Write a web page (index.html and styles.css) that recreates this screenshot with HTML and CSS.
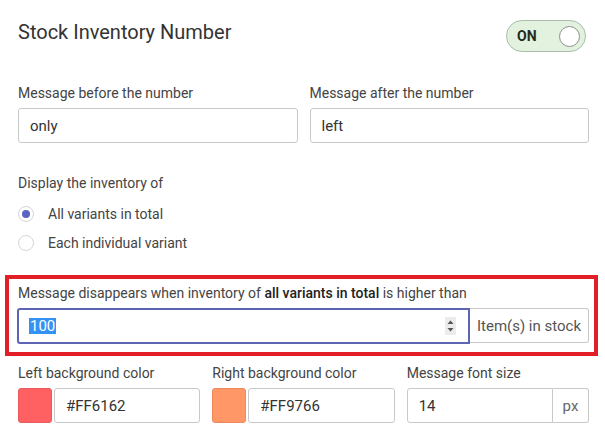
FILE: index.html
```html
<!DOCTYPE html>
<html lang="en">
<head>
<meta charset="utf-8">
<title>Stock Inventory Number</title>
<link rel="stylesheet" href="styles.css">
</head>
<body>
<div class="page">
  <div class="header">
    <h1 class="title">Stock Inventory Number</h1>
    <div class="toggle">
      <span class="toggle-label">ON</span>
      <span class="knob"></span>
    </div>
  </div>

  <div class="row row-two">
    <div class="field">
      <label class="label">Message before the number</label>
      <input class="input" type="text" value="only" readonly>
    </div>
    <div class="field">
      <label class="label">Message after the number</label>
      <input class="input" type="text" value="left" readonly>
    </div>
  </div>

  <div class="group">
    <div class="label">Display the inventory of</div>
    <div class="radios">
      <div class="radio-row"><span class="radio checked"></span><span class="radio-text">All variants in total</span></div>
      <div class="radio-row"><span class="radio"></span><span class="radio-text">Each individual variant</span></div>
    </div>
  </div>

  <div class="highlight">
    <div class="label">Message disappears when inventory of <strong>all variants in total</strong> is higher than</div>
    <div class="input-group">
      <div class="number-input">
        <span class="selected">100</span>
        <span class="spinner">
          <svg width="11" height="18" viewBox="0 0 11 18"><path d="M2.5 7 L5.5 3.5 L8.5 7 Z" fill="#555"/><path d="M2.5 11 L5.5 14.5 L8.5 11 Z" fill="#555"/></svg>
        </span>
      </div>
      <div class="addon addon-wide">Item(s) in stock</div>
    </div>
  </div>

  <div class="row row-three">
    <div class="field">
      <label class="label">Left background color</label>
      <div class="color-group">
        <span class="swatch swatch-red"></span>
        <input class="input" type="text" value="#FF6162" readonly>
      </div>
    </div>
    <div class="field">
      <label class="label">Right background color</label>
      <div class="color-group">
        <span class="swatch swatch-orange"></span>
        <input class="input" type="text" value="#FF9766" readonly>
      </div>
    </div>
    <div class="field">
      <label class="label">Message font size</label>
      <div class="input-group">
        <input class="input input-joined" type="text" value="14" readonly>
        <div class="addon addon-px">px</div>
      </div>
    </div>
  </div>
</div>
</body>
</html>
```

FILE: styles.css
```css
* { box-sizing: border-box; }

html, body {
  margin: 0;
  padding: 0;
  background: #ffffff;
}

body {
  font-family: Roboto, "Liberation Sans", Arial, sans-serif;
  color: #333333;
}

.page {
  padding: 20px 16px 0 18px;
}

.header {
  display: flex;
  justify-content: space-between;
  align-items: flex-start;
  height: 32px;
  margin-bottom: 31px;
}

.title {
  margin: 0;
  font-size: 20px;
  line-height: 24px;
  font-weight: 400;
  color: #333333;
}

.toggle {
  width: 80px;
  height: 32px;
  margin-right: 3px;
  border-radius: 16px;
  background: #e3f1df;
  border: 1px solid #a9bfac;
  display: flex;
  align-items: center;
  justify-content: space-between;
  padding: 0 5px 0 10px;
}

.toggle-label {
  font-size: 14px;
  font-weight: 700;
  color: #1f2b20;
  line-height: 16px;
}

.knob {
  width: 21px;
  height: 21px;
  border-radius: 50%;
  background: #ffffff;
  border: 1px solid #8a918b;
}

.row {
  display: grid;
  column-gap: 12px;
}

.row-two {
  grid-template-columns: 1fr 1fr;
  margin-bottom: 30px;
}

.row-three {
  grid-template-columns: 1fr 1fr 1fr;
  margin-top: 7px;
}

.field {
  display: flex;
  flex-direction: column;
  gap: 5px;
  min-width: 0;
}

.label {
  display: block;
  font-size: 14px;
  line-height: 20px;
  color: #444444;
}

.label strong {
  font-weight: 500;
  color: #222222;
}

.input {
  width: 100%;
  min-width: 0;
  height: 35px;
  margin: 0;
  border: 1px solid #c9c9c9;
  border-radius: 3px;
  padding: 0 11px;
  font-family: Roboto, "Liberation Sans", Arial, sans-serif;
  font-size: 15px;
  color: #333333;
  background: #ffffff;
  outline: none;
}

.group .radios {
  margin-top: 11px;
  display: flex;
  flex-direction: column;
  gap: 9px;
}

.radio-row {
  display: flex;
  align-items: center;
  height: 20px;
}

.radio {
  width: 16px;
  height: 16px;
  border-radius: 50%;
  border: 1px solid #d3d6da;
  background: #ffffff;
  margin-right: 14px;
  display: flex;
  align-items: center;
  justify-content: center;
}

.radio.checked::after {
  content: "";
  width: 8px;
  height: 8px;
  border-radius: 50%;
  background: #5c63c0;
}

.radio-text {
  font-size: 14px;
  line-height: 20px;
  color: #444444;
}

.highlight {
  margin: 22px -9px 0 -13px;
  border: 4px solid #e21f26;
  padding: 4px 5px 8px 9px;
}

.highlight .label {
  margin-bottom: 5px;
}

.input-group {
  display: flex;
  min-width: 0;
}

.number-input {
  flex: 1;
  height: 36px;
  border: 2px solid #5c64b3;
  border-radius: 3px 0 0 3px;
  margin-left: -1px;
  display: flex;
  align-items: center;
  justify-content: space-between;
  padding: 0 12px 0 10px;
}

.selected {
  background: #3392f4;
  color: #ffffff;
  font-size: 15px;
  line-height: 16px;
  padding: 0 1px;
}

.spinner {
  display: flex;
  background: #ececec;
  width: 11px;
  height: 18px;
}

.addon {
  height: 35px;
  border: 1px solid #c9c9c9;
  border-left: none;
  border-radius: 0 3px 3px 0;
  background: #ffffff;
  display: flex;
  align-items: center;
  justify-content: center;
  font-size: 15px;
  color: #555555;
  white-space: nowrap;
}

.addon-wide {
  width: 119px;
  flex-shrink: 0;
  padding: 0;
}

.addon-px {
  width: 36px;
  flex-shrink: 0;
  color: #666666;
}

.input-joined {
  flex: 1;
  border-radius: 3px 0 0 3px;
}

.color-group {
  display: flex;
  gap: 2px;
  min-width: 0;
}

.swatch {
  width: 34px;
  height: 35px;
  flex-shrink: 0;
  border-radius: 3px;
}

.swatch-red {
  background: #ff6162;
  border: 1px solid #e85a5b;
}

.swatch-orange {
  background: #ff9766;
  border: 1px solid #ea8a5d;
}
```
